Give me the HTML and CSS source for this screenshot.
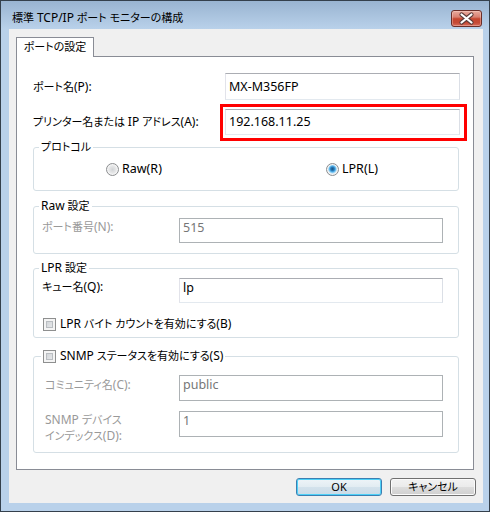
FILE: index.html
```html
<!DOCTYPE html>
<html lang="ja">
<head>
<meta charset="utf-8">
<title>標準 TCP/IP ポート モニターの構成</title>
<link rel="stylesheet" href="styles.css">
</head>
<body>
<div class="window">
  <div class="titlebar">
    <span class="title">標準 <span class="l">TCP/IP</span> ポート モニターの構成</span>
    <div class="close">
      <svg width="29" height="15" viewBox="0 0 29 15">
        <path d="M9.5 3.5 L19.5 11.5 M19.5 3.5 L9.5 11.5" stroke="#5a3a38" stroke-width="4.2" stroke-linecap="round" fill="none"/>
        <path d="M9.5 3.5 L19.5 11.5 M19.5 3.5 L9.5 11.5" stroke="#ffffff" stroke-width="2.2" stroke-linecap="round" fill="none"/>
      </svg>
    </div>
  </div>
  <div class="frame">
    <div class="client">
      <div class="tabs"><div class="tab">ポートの設定</div></div>
      <div class="panel">
        <div class="toprow first">
          <span class="lbl">ポート名<span class="l">(P):</span></span>
          <div class="tb tall">MX-M356FP</div>
        </div>
        <div class="toprow second">
          <span class="lbl">プリンター名または <span class="l">IP</span> アドレス<span class="l">(A):</span></span>
          <div class="tb mid highlight">192.168.11.25</div>
        </div>

        <fieldset class="group protocol">
          <legend>プロトコル</legend>
          <div class="radios">
            <span class="radio-item raw"><span class="radio"></span><span class="rl">Raw(R)</span></span>
            <span class="radio-item"><span class="radio checked"></span><span class="rl">LPR(L)</span></span>
          </div>
        </fieldset>

        <fieldset class="group rawset">
          <legend><span class="l">Raw</span> 設定</legend>
          <div class="grow raw-body">
            <span class="lbl disabled">ポート番号<span class="l">(N):</span></span>
            <div class="tb small off">515</div>
          </div>
        </fieldset>

        <fieldset class="group lprset">
          <legend><span class="l">LPR</span> 設定</legend>
          <div class="grow lpr-body">
            <span class="lbl">キュー名<span class="l">(Q):</span></span>
            <div class="tb small">lp</div>
          </div>
          <div class="checkrow">
            <span class="check"></span><span><span class="l">LPR</span> バイト カウントを有効にする<span class="l">(B)</span></span>
          </div>
        </fieldset>

        <fieldset class="group snmpset">
          <legend class="checklegend"><span class="check"></span><span><span class="l">SNMP</span> ステータスを有効にする<span class="l">(S)</span></span></legend>
          <div class="grow snmp-body">
            <span class="lbl disabled">コミュニティ名<span class="l">(C):</span></span>
            <div class="tb mid off">public</div>
            <span class="lbl disabled"><span class="l">SNMP</span> デバイス<br>インデックス<span class="l">(D):</span></span>
            <div class="tb mid off">1</div>
          </div>
        </fieldset>
      </div>
      <div class="buttons">
        <div class="btn default">OK</div>
        <div class="btn">キャンセル</div>
      </div>
    </div>
  </div>
</div>
</body>
</html>
```

FILE: styles.css
```css
* { box-sizing: border-box; }
html, body { margin: 0; padding: 0; background: #ffffff; }
body {
  font-family: "Noto Sans", "Noto Sans CJK JP", sans-serif;
  font-size: 11px;
  line-height: 16px;
  color: #000;
  font-feature-settings: "palt";
}
.l { font-size: 12px; line-height: 10px; }

.window {
  width: 490px;
  height: 512px;
  border: 1px solid #34404c;
  background: #b9d1ea;
  display: flex;
  flex-direction: column;
}

.titlebar {
  height: 28px;
  flex: none;
  background: linear-gradient(#99b4d1, #b9d1ea);
  display: flex;
  align-items: flex-start;
  padding: 8px 7px 0 11px;
}
.title { flex: 1; line-height: 17px; color: #000; font-size: 11px; }
.close {
  width: 31px;
  height: 17px;
  margin-top: 1px;
  border: 1px solid #6a2e29;
  border-radius: 3px;
  background: linear-gradient(#e9ab9e 0%, #d98172 40%, #c5462f 52%, #c54a36 78%, #d76d5c 100%);
  box-shadow: inset 0 0 0 1px rgba(255, 230, 220, 0.35);
  display: flex;
  align-items: center;
  justify-content: center;
}
.close svg { display: block; }

.frame {
  flex: 1;
  display: flex;
  padding: 0 6px 8px 8px;
}
.client {
  flex: 1;
  background: #f0f0f0;
  padding: 8px 0 0 7px;
  display: flex;
  flex-direction: column;
}

.tabs { display: flex; }
.tab {
  width: 78px;
  height: 20px;
  border: 1px solid #898c95;
  border-bottom: none;
  background: #fff;
  margin-bottom: -1px;
  position: relative;
  z-index: 1;
  text-align: center;
  line-height: 17px;
}

.panel {
  width: 458px;
  height: 414px;
  border: 1px solid #898c95;
  background: #fff;
  padding: 16px 13px 0 16px;
}

.toprow {
  display: grid;
  grid-template-columns: 192px 235px;
  align-items: center;
}
.toprow.second { margin-top: 9px; }

.tb {
  background: #fff;
  border: 1px solid;
  border-color: #abadb3 #dbdfe6 #e3e9ef #e2e3ea;
  padding: 0 0 0 3px;
  display: flex;
  align-items: center;
  color: #000;
  font-size: 12.5px;
}
.tb.tall { height: 27px; }
.tb.mid { height: 26px; }
.tb.small { height: 25px; }
.group .tb { align-items: flex-start; padding-top: 1px; }
.tb.off { border-color: #adb2b5; color: #767676; }

.highlight { position: relative; }
.highlight::after {
  content: "";
  position: absolute;
  left: -6px;
  top: -6px;
  right: -8px;
  bottom: -7px;
  border: 3px solid #ff0000;
}

.group {
  width: 426px;
  margin: 0;
  padding: 0;
  min-width: 0;
  border: 1px solid #d5dfe5;
  border-radius: 3px;
}
.group legend {
  margin-left: 5px;
  padding: 0 2px;
  line-height: 16px;
}
.group.protocol { margin-top: 4px; }
.group.rawset { margin-top: 7px; }
.group.lprset { margin-top: 6px; }
.group.snmpset { margin-top: 10px; }

.radios {
  display: flex;
  padding: 6px 0 13px 72px;
}
.radio-item { display: flex; align-items: center; gap: 3px; }
.radio-item.raw { width: 220px; }
.rl { font-size: 12.5px; }
.radio {
  width: 13px;
  height: 13px;
  border-radius: 50%;
  border: 1px solid #8b8d8f;
  background: radial-gradient(circle at 50% 50%, #d2d4d6 0, #e6e7e8 45%, #f8f8f8 80%, #ffffff 100%);
  box-shadow: inset 0 0 0 1px #f4f4f4;
}
.radio.checked {
  background: radial-gradient(circle at 50% 45%, #16507e 0, #2a7ab8 1.8px, #57b4ec 3px, #a9dbf6 4px, #e4ecf1 4.8px, #f6f6f6 100%);
}

.grow {
  display: grid;
  align-items: start;
}
.grow .lbl { padding-top: 1px; }
.raw-body, .lpr-body {
  grid-template-columns: 137px 264px;
  padding-left: 8px;
}
.raw-body { padding-top: 4px; padding-bottom: 10px; }
.lpr-body { padding-top: 2px; }
.snmp-body {
  grid-template-columns: 134px 264px;
  row-gap: 10px;
  padding: 11px 0 8px 11px;
}
.snmp-body .lbl { padding-top: 2px; }
.snmp-body .lbl + .tb + .lbl { padding-top: 1px; }

.lbl.disabled { color: #999999; }

.checkrow {
  display: flex;
  align-items: center;
  gap: 4px;
  margin-top: 13px;
  padding: 0 0 5px 9px;
}
.check {
  width: 13px;
  height: 13px;
  flex: none;
  border: 1px solid #8e8f8f;
  background: linear-gradient(135deg, #c9ccd0, #eef0f2);
  box-shadow: inset 0 0 0 2px #f4f4f4, inset 0 0 0 3px #b9bdc1;
}
.group legend.checklegend {
  margin-left: 7px;
  display: flex;
  align-items: center;
  gap: 4px;
}

.buttons {
  display: flex;
  justify-content: flex-end;
  gap: 8px;
  margin-top: 8px;
  padding-right: 7px;
}
.btn {
  width: 86px;
  height: 18px;
  border: 1px solid #707070;
  border-radius: 3px;
  background: linear-gradient(#f2f2f2 0%, #ebebeb 50%, #dddddd 50%, #cfcfcf 100%);
  box-shadow: inset 0 0 0 1px #fbfbfb;
  text-align: center;
  line-height: 15px;
}
.btn.default {
  border-color: #3c7fb1;
  background: linear-gradient(#eef4f8 0%, #e2ecf2 50%, #d3e2ec 50%, #cadbe7 100%);
  box-shadow: inset 0 0 0 1px #4dd0f7;
}
```
